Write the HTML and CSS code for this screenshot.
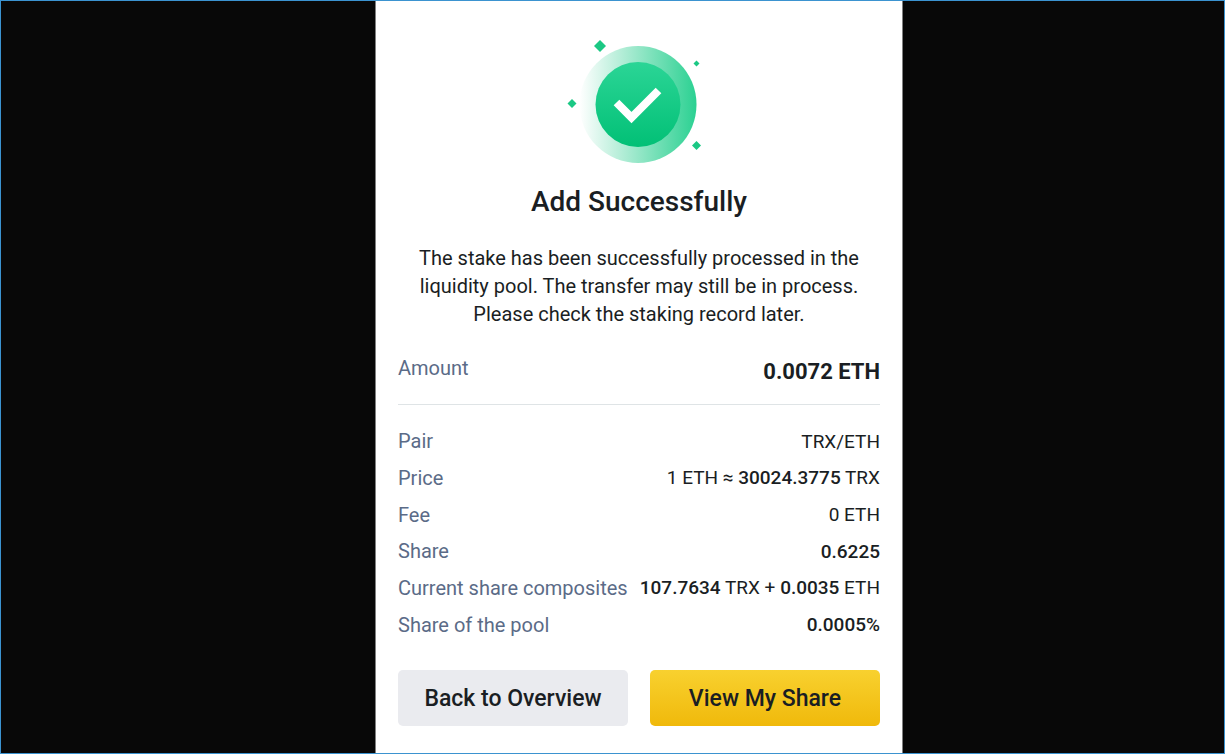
FILE: index.html
```html
<!DOCTYPE html>
<html lang="en">
<head>
    <meta charset="UTF-8">
    <meta name="viewport" content="width=device-width, initial-scale=1.0">
    <title>Add Successfully</title>
    <link rel="stylesheet" href="styles.css">
</head>
<body>
    <main class="card">
        <svg class="success-icon" viewBox="0 0 160 145" width="160" height="145" aria-hidden="true">
            <defs>
                <linearGradient id="ring" x1="0" y1="0" x2="1" y2="0">
                    <stop offset="0" stop-color="#2ecc8f" stop-opacity="0"/>
                    <stop offset="1" stop-color="#2bd192"/>
                </linearGradient>
                <linearGradient id="disc" x1="0" y1="0" x2="0" y2="1">
                    <stop offset="0" stop-color="#2bd596"/>
                    <stop offset="1" stop-color="#02c076"/>
                </linearGradient>
            </defs>
            <circle cx="79" cy="74.5" r="58.5" fill="url(#ring)"/>
            <circle cx="79" cy="74.5" r="42.5" fill="url(#disc)"/>
            <path d="M57.5 72.5 L72.5 87.5 L99.5 60.5" fill="none" stroke="#fff" stroke-width="8"/>
            <g fill="#1bc884">
                <path d="M41 10 L47 16 L41 22 L35 16 Z"/>
                <path d="M13 69 L17.500 73.500 L13 78 L8.500 73.500 Z"/>
                <path d="M137.500 30.500 L140.500 33.500 L137.500 36.500 L134.500 33.500 Z"/>
                <path d="M137.500 111 L142 115.500 L137.500 120 L133 115.500 Z"/>
            </g>
        </svg>
        <h1>Add Successfully</h1>
        <p class="message">The stake has been successfully processed in the liquidity pool. The transfer may still be in process. Please check the staking record later.</p>
        <dl class="amount">
            <dt>Amount</dt>
            <dd>0.0072 ETH</dd>
        </dl>
        <dl class="details">
            <div class="row"><dt>Pair</dt><dd>TRX/ETH</dd></div>
            <div class="row"><dt>Price</dt><dd>1 ETH ≈ <b>30024.3775</b> TRX</dd></div>
            <div class="row"><dt>Fee</dt><dd>0 ETH</dd></div>
            <div class="row"><dt>Share</dt><dd><b>0.6225</b></dd></div>
            <div class="row"><dt>Current share composites</dt><dd><b>107.7634</b> TRX + <b>0.0035</b> ETH</dd></div>
            <div class="row"><dt>Share of the pool</dt><dd><b>0.0005%</b></dd></div>
        </dl>
        <div class="actions">
            <button type="button" class="btn">Back to Overview</button>
            <button type="button" class="btn btn-primary">View My Share</button>
        </div>
    </main>
</body>
</html>
```
FILE: styles.css
```css
* {
    box-sizing: border-box;
}
body {
    margin: 0;
    min-height: 100vh;
    display: grid;
    grid-template-columns: 374fr 528fr 321fr;
    border: 1px solid #3b93d0;
    background-color: #080808;
    color: #1a1e23;
    font-family: Roboto, sans-serif;
    font-size: 20px;
}
.card {
    grid-column: 2;
    display: flex;
    flex-direction: column;
    padding: 29px 22px 27px;
    border: solid #808080;
    border-width: 0 1px;
    background-color: #fff;
}
.success-icon {
    align-self: center;
}
h1 {
    margin: 9px 0 0;
    font-size: 28px;
    font-weight: 500;
    line-height: 36px;
    text-align: center;
}
.message {
    margin: 24px 16px 0;
    line-height: 28px;
    text-align: center;
}
dl, dd {
    margin: 0;
}
dt {
    color: #5b6b87;
}
.amount {
    display: flex;
    justify-content: space-between;
    margin-top: 28px;
    padding-bottom: 20px;
    border-bottom: 1px solid #dfe4e6;
    line-height: 24px;
}
.amount dd {
    padding-top: 4px;
    font-size: 22px;
    font-weight: 700;
}
.details {
    flex: 1;
    display: grid;
    grid-auto-rows: 1fr;
    margin: 18px 0 27px;
}
.row {
    display: flex;
    align-items: center;
    justify-content: space-between;
    white-space: nowrap;
}
.row dd {
    font-size: 19px;
}
.row b {
    font-weight: 500;
}
.actions {
    display: grid;
    grid-template-columns: 1fr 1fr;
    gap: 22px;
}
.btn {
    height: 56px;
    padding: 0;
    border: none;
    border-radius: 5px;
    background-color: #eaebef;
    color: #1a1e23;
    font-family: inherit;
    font-size: 23px;
    font-weight: 500;
    cursor: pointer;
}
.btn-primary {
    background: linear-gradient(#f8d12f, #f0b90b);
}
```
